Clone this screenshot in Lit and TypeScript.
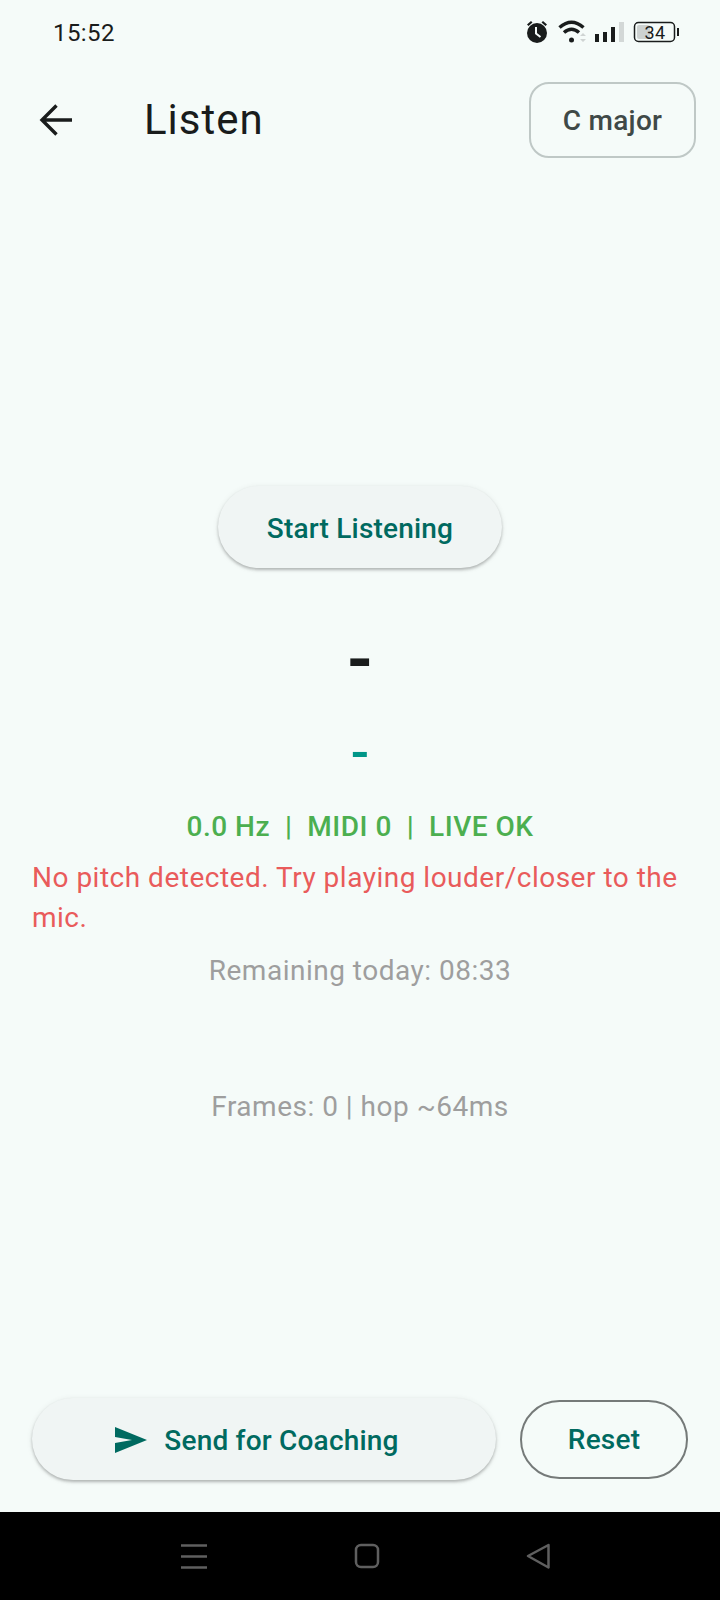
import { LitElement, html, css } from 'lit';
import { customElement } from 'lit/decorators.js';

@customElement('app-root')
class AppRoot extends LitElement {
  static styles = css`
    :host {
      display: flex;
      flex-direction: column;
      width: 720px;
      height: 1600px;
      background: #f5fbf9;
      font-family: Roboto, 'Liberation Sans', sans-serif;
      color: #191c1c;
    }

    .status {
      display: flex;
      align-items: center;
      justify-content: space-between;
      height: 66px;
      padding: 0 40px 0 53px;
      box-sizing: border-box;
      font-size: 24px;
      letter-spacing: 0.4px;
    }

    .status svg {
      display: block;
    }

    .appbar {
      display: flex;
      align-items: center;
      height: 106px;
      padding: 0 24px 0 38px;
    }

    .appbar_back {
      display: block;
      width: 36px;
      height: 36px;
    }

    .appbar_title {
      flex: 1;
      margin-left: 70px;
      font-size: 42px;
      letter-spacing: 1px;
    }

    .key {
      display: flex;
      align-items: center;
      justify-content: center;
      width: 167px;
      height: 76px;
      margin-top: 2px;
      box-sizing: border-box;
      border: 2px solid #bfc8c6;
      border-radius: 20px;
      font-size: 28px;
      font-weight: 500;
      letter-spacing: 0.3px;
      color: #3f4947;
    }

    .main {
      flex: 1;
      display: flex;
      flex-direction: column;
      align-items: center;
      padding: 0 32px;
    }

    .filled {
      display: flex;
      align-items: center;
      justify-content: center;
      height: 82px;
      box-sizing: border-box;
      padding-top: 2px;
      border-radius: 41px;
      background: #f0f5f4;
      box-shadow: 0 2px 3px rgba(0, 0, 0, 0.24), 0 1px 6px rgba(0, 0, 0, 0.08);
      font-size: 28px;
      font-weight: 500;
      letter-spacing: 0.2px;
      color: #006a60;
    }

    .start {
      width: 284px;
      margin-top: 314px;
    }

    .note {
      margin-top: 52px;
      height: 80px;
      line-height: 80px;
      font-size: 68px;
      font-weight: 700;
    }

    .sub {
      margin-top: 23px;
      height: 60px;
      line-height: 60px;
      font-size: 54px;
      font-weight: 500;
      color: #009688;
    }

    .readout {
      margin-top: 24px;
      height: 40px;
      line-height: 40px;
      font-size: 28px;
      font-weight: 500;
      letter-spacing: 0.5px;
      white-space: pre;
      color: #4caf50;
    }

    .error {
      align-self: stretch;
      margin-top: 11px;
      line-height: 40px;
      font-size: 28px;
      letter-spacing: 0.5px;
      color: #e95b5b;
    }

    .muted {
      line-height: 40px;
      font-size: 28px;
      letter-spacing: 0.5px;
      color: #9e9e9e;
    }

    .remaining {
      margin-top: 13px;
    }

    .frames {
      margin-top: 96px;
    }

    .actions {
      display: flex;
      align-items: center;
      gap: 24px;
      padding: 0 32px 32px;
    }

    .send {
      flex: 1;
      gap: 17px;
      padding-right: 14px;
    }

    .send svg {
      display: block;
      width: 32px;
      height: 26px;
    }

    .reset {
      display: flex;
      align-items: center;
      justify-content: center;
      width: 168px;
      height: 79px;
      margin-top: 1px;
      box-sizing: border-box;
      border: 2px solid #757a79;
      border-radius: 40px;
      font-size: 28px;
      font-weight: 500;
      letter-spacing: 0.2px;
      color: #006a60;
    }

    .nav {
      display: flex;
      align-items: center;
      height: 88px;
      background: #000;
      padding-left: 181px;
    }

    .nav svg {
      display: block;
      fill: none;
      stroke: #5f5f5f;
      stroke-width: 2.5;
    }

    .nav_home {
      margin-left: 147px;
    }

    .nav_back {
      margin-left: 146px;
    }
  `;

  protected render() {
    return html`
      <div class="status">
        <span>15:52</span>
        <svg width="160" height="30" viewBox="0 0 160 30">
          <path d="M7 6.500l4-3.500 1.500 1.600-4 3.500zM27 6.500l-4-3.500-1.500 1.600 4 3.500z" fill="#191c1c" />
          <circle cx="17" cy="15" r="10" fill="#191c1c" />
          <path d="M16 9v6.500l4.500 3.500" fill="none" stroke="#f5fbf9" stroke-width="2" />
          <path
            d="M39.500 9.500Q51.500 -1 63.500 9.500M44 14.500Q51.500 8 59 14.500"
            fill="none"
            stroke="#191c1c"
            stroke-width="3.500"
          />
          <circle cx="51.500" cy="22" r="2.500" fill="#191c1c" />
          <path d="M60 18l3-3 3 3zM60 21l3 3 3-3z" fill="#cfd4d3" />
          <rect x="75" y="16" width="4" height="8" fill="#191c1c" />
          <rect x="83" y="14" width="4" height="10" fill="#191c1c" />
          <rect x="91" y="9" width="4" height="15" fill="#191c1c" />
          <rect x="99" y="4" width="5" height="20" fill="#d3d8d7" />
          <rect x="114.500" y="4.500" width="40" height="19" rx="4" fill="none" stroke="#191c1c" stroke-width="1.500" />
          <rect x="117" y="7" width="13" height="14" rx="2" fill="#cdd2d1" />
          <text x="135" y="20.500" text-anchor="middle" font-size="18" fill="#191c1c" font-family="Roboto, sans-serif">34</text>
          <rect x="157" y="10" width="2" height="8" fill="#191c1c" />
        </svg>
      </div>
      <div class="appbar">
        <svg class="appbar_back" viewBox="0 0 36 36" fill="none" stroke="#191c1c" stroke-width="3.400">
          <path d="M34 19H4M18.500 4.500L4 19l14.500 14.500" />
        </svg>
        <div class="appbar_title">Listen</div>
        <div class="key">C major</div>
      </div>
      <div class="main">
        <div class="filled start">Start Listening</div>
        <div class="note">-</div>
        <div class="sub">-</div>
        <div class="readout">0.0 Hz  |  MIDI 0  |  LIVE OK</div>
        <div class="error">No pitch detected. Try playing louder/closer to the mic.</div>
        <div class="muted remaining">Remaining today: 08:33</div>
        <div class="muted frames">Frames: 0 | hop ~64ms</div>
      </div>
      <div class="actions">
        <div class="filled send">
          <svg viewBox="0 0 32 26"><path d="M0 0l32 13L0 26l0-10 17-3L0 10z" fill="#006a60" /></svg>
          <span>Send for Coaching</span>
        </div>
        <div class="reset">Reset</div>
      </div>
      <div class="nav">
        <svg width="26" height="25" viewBox="0 0 26 25"><path d="M0 1.500h26M0 12.500h26M0 23.500h26" /></svg>
        <svg class="nav_home" width="26" height="26" viewBox="0 0 26 26"><rect x="2" y="2" width="22" height="22" rx="5" /></svg>
        <svg class="nav_back" width="24" height="26" viewBox="0 0 24 26"><path d="M22.500 2L2 13l20.500 11.500z" stroke-linejoin="round" /></svg>
      </div>
    `;
  }
}
